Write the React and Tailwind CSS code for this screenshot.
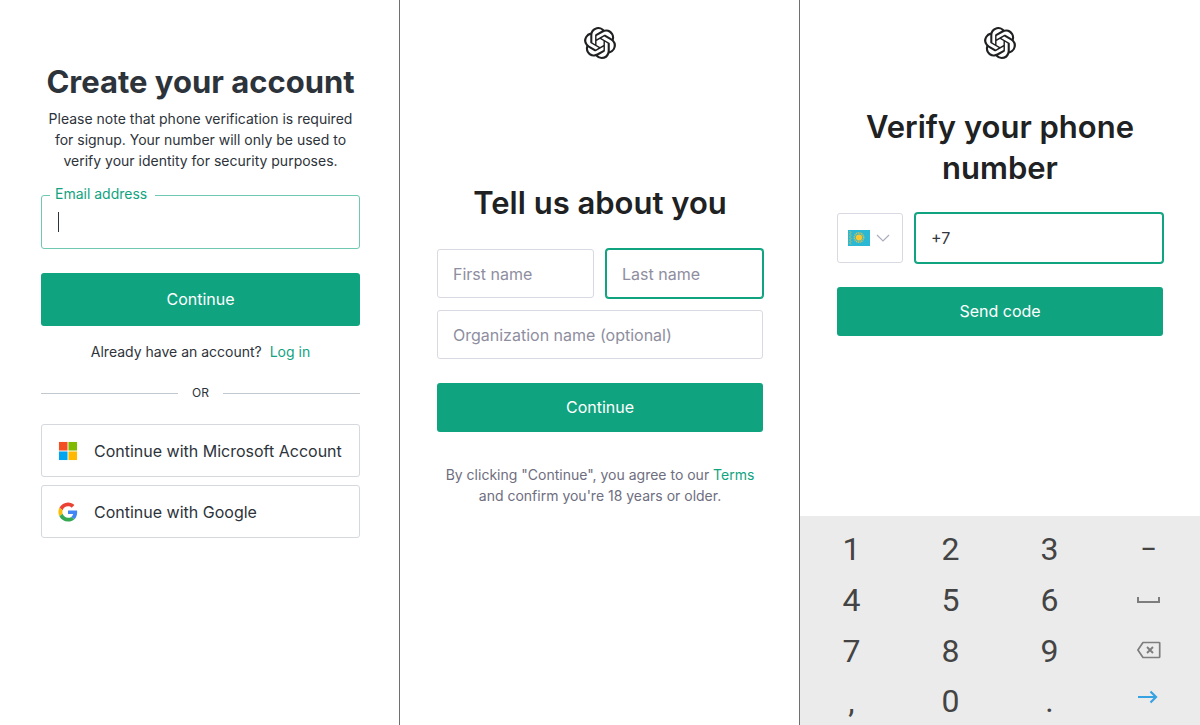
import React, { useState } from 'react';
import { SiOpenai } from 'react-icons/si';

const GREEN_BUTTON = 'block w-full rounded-[3px] bg-[#10a37f] pb-[2px] text-base text-white';
const FIELD = 'w-full min-w-0 rounded-[3px] border border-[#d9d9e3] bg-white px-[15px] text-base text-[#353740] placeholder:text-[#8e8ea0] outline-none';
const FIELD_ACTIVE = 'w-full min-w-0 rounded-[3px] border border-[#10a37f] ring-1 ring-[#10a37f] bg-white px-[15px] text-base text-[#353740] placeholder:text-[#8e8ea0] outline-none';
const SOCIAL_BUTTON = 'flex h-[53px] items-center gap-4 rounded-[3px] border border-[#d5d9dd] px-4 text-base';

const MicrosoftIcon = () => (
  <svg width="20" height="20" viewBox="0 0 21 21" aria-hidden="true">
    <rect x="1" y="1" width="9" height="9" fill="#f25022" />
    <rect x="11" y="1" width="9" height="9" fill="#7fba00" />
    <rect x="1" y="11" width="9" height="9" fill="#00a4ef" />
    <rect x="11" y="11" width="9" height="9" fill="#ffb900" />
  </svg>
);

const GoogleIcon = () => (
  <svg width="20" height="20" viewBox="-1 -1 50 50" aria-hidden="true">
    <path fill="#EA4335" d="M24 9.5c3.54 0 6.71 1.22 9.21 3.6l6.85-6.85C35.9 2.38 30.47 0 24 0 14.62 0 6.51 5.38 2.56 13.22l7.98 6.19C12.43 13.72 17.74 9.5 24 9.5z" />
    <path fill="#4285F4" d="M46.98 24.55c0-1.57-.15-3.09-.38-4.55H24v9.02h12.94c-.58 2.96-2.26 5.48-4.78 7.18l7.73 6c4.51-4.18 7.09-10.36 7.09-17.65z" />
    <path fill="#FBBC05" d="M10.53 28.59c-.48-1.45-.76-2.99-.76-4.59s.27-3.14.76-4.59l-7.98-6.19C.92 16.46 0 20.12 0 24s.92 7.54 2.56 10.78l7.97-6.19z" />
    <path fill="#34A853" d="M24 48c6.48 0 11.93-2.13 15.89-5.81l-7.73-6c-2.15 1.45-4.92 2.3-8.16 2.3-6.26 0-11.57-4.22-13.47-9.91l-7.98 6.19C6.51 42.62 14.62 48 24 48z" />
  </svg>
);

const KazakhstanFlag = () => (
  <svg width="22" height="16" viewBox="0 0 22 16" aria-hidden="true">
    <rect width="22" height="16" fill="#2bb8d4" />
    <path d="M1.5 1l1.5 1.5-1.5 1.5L3 5.5 1.5 7 3 8.5 1.5 10 3 11.5 1.5 13 3 14.5" fill="none" stroke="#c9bf4e" strokeWidth="1" />
    <circle cx="11" cy="7.5" r="4.6" fill="none" stroke="#d9c04a" strokeWidth="1.6" strokeDasharray="1.1 .7" />
    <circle cx="11" cy="7.5" r="3.1" fill="#fdc62f" />
  </svg>
);

const SpaceIcon = () => (
  <svg width="24" height="8" viewBox="0 0 24 8" fill="none" stroke="#7d7d7d" strokeWidth="2" aria-hidden="true">
    <path d="M1 1v5h21V1" />
  </svg>
);

const BackspaceIcon = () => (
  <svg width="24" height="18" viewBox="0 0 24 18" fill="none" stroke="#7d7d7d" strokeWidth="1.7" strokeLinejoin="round" aria-hidden="true">
    <path d="M6 1.5h16a.7.7 0 0 1 .7.7v13.6a.7.7 0 0 1-.7.7H6L.9 9z" />
    <path d="M10 6l6 6M16 6l-6 6" strokeWidth="1.9" />
  </svg>
);

const ArrowIcon = () => (
  <svg width="22" height="14" viewBox="0 0 22 14" fill="none" stroke="#35a2e2" strokeWidth="2.2" aria-hidden="true">
    <path d="M0 7h18M12.500 1.500L18 7l-5.500 5.500" />
  </svg>
);

const KEYS = [
  '1', '2', '3', '–',
  '4', '5', '6', 'space',
  '7', '8', '9', 'backspace',
  ',', '0', '.', 'next',
];

const KEY_FACES = {
  '–': <span className="text-2xl font-medium">–</span>,
  space: <SpaceIcon />,
  backspace: <span className="pb-[2px]"><BackspaceIcon /></span>,
  next: <span className="pb-2"><ArrowIcon /></span>,
};

const CreateAccount = () => {
  const [email, setEmail] = useState('');

  return (
    <section className="border-r border-[#6f6f6f] pt-[62px] pr-[39px] pl-[41px] text-[#2d333a]">
      <h1 className="text-center text-[31px] leading-10 font-bold">Create your account</h1>
      <p className="mx-auto mt-[6px] max-w-[310px] text-center text-sm leading-[21px]">
        Please note that phone verification is required for signup. Your number will only be used to verify your identity for security purposes.
      </p>

      <form onSubmit={e => e.preventDefault()}>
        <div className="relative mt-6">
          <label htmlFor="email" className="absolute -top-[11px] left-[9px] bg-white pr-2 pl-[5px] text-sm leading-5 text-[#10a37f]">Email address</label>
          <input
            id="email"
            type="email"
            value={email}
            onChange={e => setEmail(e.target.value)}
            className="block h-[54px] w-full rounded-[3px] border border-[#6fc8b2] px-4 text-base outline-none"
          />
          {!email && <span className="pointer-events-none absolute top-[17px] left-[17px] h-5 w-px bg-[#2d333a]"></span>}
        </div>
        <button type="submit" className={`${GREEN_BUTTON} mt-6 h-[53px]`}>Continue</button>
      </form>

      <p className="mt-4 text-center text-sm leading-5">
        Already have an account? <a href="#login" className="ml-1 text-[#10a37f]">Log in</a>
      </p>

      <div className="mt-[21px] flex items-center gap-[14px] text-xs leading-5">
        <div className="h-px flex-1 bg-[#c2c8d0]"></div>
        OR
        <div className="h-px flex-1 bg-[#c2c8d0]"></div>
      </div>

      <div className="mt-[21px] flex flex-col gap-2">
        <button type="button" className={SOCIAL_BUTTON}>
          <MicrosoftIcon /> Continue with Microsoft Account
        </button>
        <button type="button" className={SOCIAL_BUTTON}>
          <GoogleIcon /> Continue with Google
        </button>
      </div>
    </section>
  );
};

const AboutYou = () => (
  <section className="border-r border-[#6f6f6f] pt-[27px] pr-9 pl-[37px] text-[#202123]">
    <SiOpenai size={32} className="mx-auto" />
    <h1 className="mt-[124px] text-center text-[31px] leading-10 font-semibold">Tell us about you</h1>
    <form onSubmit={e => e.preventDefault()} className="mt-[26px]">
      <div className="grid grid-cols-2 gap-3">
        <input aria-label="First name" placeholder="First name" className={`${FIELD} h-[49px]`} />
        <input aria-label="Last name" placeholder="Last name" className={`${FIELD_ACTIVE} h-[49px]`} />
        <input aria-label="Organization name (optional)" placeholder="Organization name (optional)" className={`${FIELD} col-span-2 h-[49px]`} />
      </div>
      <button type="submit" className={`${GREEN_BUTTON} mt-6 h-[49px]`}>Continue</button>
    </form>
    <p className="mt-8 text-center text-sm leading-[21px] text-[#6e6e80]">
      By clicking "Continue", you agree to our <a href="#terms" className="text-[#10a37f]">Terms</a><br />
      and confirm you're 18 years or older.
    </p>
  </section>
);

const Keypad = () => (
  <div className="mt-auto grid grid-cols-4 grid-rows-[51px_51px_51px_49px] bg-[#ebebeb] px-[2px] pt-[7px]">
    {KEYS.map(key => (
      <button
        key={key}
        type="button"
        aria-label={key}
        className="flex items-center justify-center font-[Roboto,sans-serif] text-[32px] leading-none text-[#444444]"
      >
        {KEY_FACES[key] || key}
      </button>
    ))}
  </div>
);

const VerifyPhone = () => {
  const [phone, setPhone] = useState('+7');

  return (
    <section className="flex flex-col pt-[27px] text-[#202123]">
      <SiOpenai size={32} className="mx-auto" />
      <div className="px-[37px] pt-[47px]">
        <h1 className="text-center text-[31px] leading-[41px] font-semibold">Verify your phone number</h1>
        <form onSubmit={e => e.preventDefault()} className="mt-[25px]">
          <div className="flex gap-3">
            <div className="relative flex h-[50px] w-[66px] shrink-0 items-center gap-[6px] rounded-[3px] border border-[#d9d9e3] pl-[10px]">
              <KazakhstanFlag />
              <svg width="14" height="8" viewBox="0 0 14 8" fill="none" stroke="#acacbe" strokeWidth="1.2" aria-hidden="true">
                <path d="M1 1l6 6 6-6" />
              </svg>
              <select aria-label="Country" className="absolute inset-0 w-full opacity-0">
                <option>Kazakhstan</option>
              </select>
            </div>
            <input aria-label="Phone number" type="tel" value={phone} onChange={e => setPhone(e.target.value)} className={`${FIELD_ACTIVE} h-[50px]`} />
          </div>
          <button type="submit" className={`${GREEN_BUTTON} mt-6 h-[49px]`}>Send code</button>
        </form>
      </div>
      <Keypad />
    </section>
  );
};

const App = () => {
  return (
    <main className="grid min-h-screen grid-cols-3 bg-white font-[Inter,sans-serif]">
      <CreateAccount />
      <AboutYou />
      <VerifyPhone />
    </main>
  );
};

export default App;
